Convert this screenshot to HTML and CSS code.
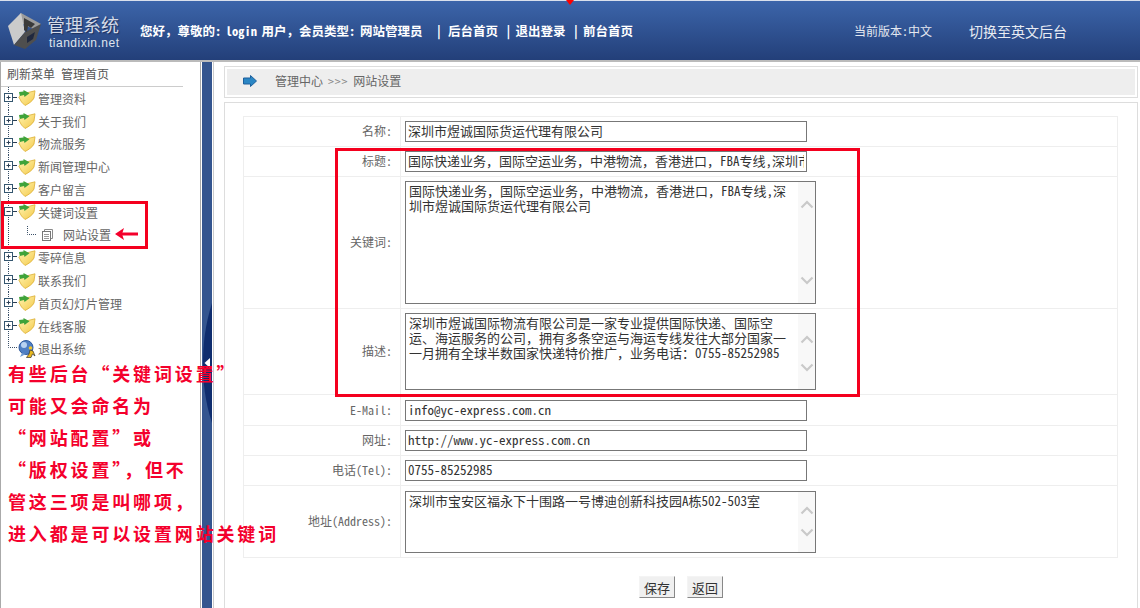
FILE: index.html
```html
<!DOCTYPE html>
<html lang="zh-CN">
<head>
    <meta charset="UTF-8">
    <title>网站设置</title>
    <link rel="stylesheet" href="styles.css">
</head>
<body>
    <svg class="defs" width="0" height="0">
        <defs>
            <linearGradient id="folder-fill" x1="0" y1="0" x2="1" y2="1">
                <stop offset="0" stop-color="#fff4b0"/>
                <stop offset="1" stop-color="#f4c94a"/>
            </linearGradient>
            <symbol id="folder" viewBox="0 0 18 16">
                <path d="M0.800 7 L4 4 L17 0.800 L16 8 C14.500 11 11 13.500 7 15.500 L3.500 12 Z" fill="url(#folder-fill)" stroke="#dcae34" stroke-width="0.800"/>
                <path d="M1 2 L5.500 1.500 L5.500 0 L11.500 3.200 L6.500 7 L6 5 L1.800 6 Z" fill="#3fa33a"/>
            </symbol>
            <symbol id="tw-plus" viewBox="0 0 14 23">
                <path d="M4.500 0 V23" stroke="#3a5068" stroke-dasharray="1 1"/>
                <rect x="0.500" y="6.500" width="8" height="8" fill="#fff" stroke="#34566f"/>
                <path d="M2.500 10.500 H6.500 M4.500 8.500 V12.500 M9 10.500 H13" stroke="#2a3f55"/>
            </symbol>
            <symbol id="tw-minus" viewBox="0 0 14 23">
                <path d="M4.500 0 V23" stroke="#3a5068" stroke-dasharray="1 1"/>
                <rect x="0.500" y="6.500" width="8" height="8" fill="#fff" stroke="#34566f"/>
                <path d="M2.500 10.500 H6.500 M9 10.500 H13" stroke="#2a3f55"/>
            </symbol>
            <symbol id="chev-up" viewBox="0 0 14 9">
                <path d="M1.500 7.500 L7 2 L12.500 7.500" fill="none" stroke="#c9c9c9" stroke-width="2.200"/>
            </symbol>
            <symbol id="chev-down" viewBox="0 0 14 9">
                <path d="M1.500 1.500 L7 7 L12.500 1.500" fill="none" stroke="#c9c9c9" stroke-width="2.200"/>
            </symbol>
        </defs>
    </svg>

    <header class="topbar">
        <div class="logo">
            <svg class="logo-mark" width="36" height="38" viewBox="0 0 36 38">
                <path d="M14 1 L34 12 L28 18 L8 8 Z" fill="#9c9c9c"/>
                <path d="M1 14 L14 1 L18 20 L7 33 Z" fill="#cbcbcb"/>
                <path d="M18 20 L34 12 L29 28 L18 37 L7 33 Z" fill="#4e4e4e"/>
                <path d="M20 25 L28 20 L26 27 L20 31 Z" fill="#20283e"/>
                <path d="M17 6 L28 12 L24 16 L21 14 L20 20 L17 18 Z" fill="#3a3a3a"/>
            </svg>
            <div class="logo-text">
                <div class="logo-title">管理系统</div>
                <div class="logo-site">tiandixin.net</div>
            </div>
        </div>
        <div class="welcome">
            <span>您好，尊敬的: login 用户，会员类型: 网站管理员</span>
            <span class="sep first">|</span><a href="#">后台首页</a>
            <span class="sep">|</span><a href="#">退出登录</a>
            <span class="sep">|</span><a href="#">前台首页</a>
        </div>
        <div class="version">当前版本:中文</div>
        <a class="switch-lang" href="#">切换至英文后台</a>
    </header>

    <div class="layout">
        <aside class="sidebar">
            <div class="side-head">刷新菜单 管理首页</div>
            <ul class="tree">
                <li class="tree-row"><svg class="twig"><use href="#tw-plus"/></svg><svg class="folder"><use href="#folder"/></svg>管理资料</li>
                <li class="tree-row"><svg class="twig"><use href="#tw-plus"/></svg><svg class="folder"><use href="#folder"/></svg>关于我们</li>
                <li class="tree-row"><svg class="twig"><use href="#tw-plus"/></svg><svg class="folder"><use href="#folder"/></svg>物流服务</li>
                <li class="tree-row"><svg class="twig"><use href="#tw-plus"/></svg><svg class="folder"><use href="#folder"/></svg>新闻管理中心</li>
                <li class="tree-row"><svg class="twig"><use href="#tw-plus"/></svg><svg class="folder"><use href="#folder"/></svg>客户留言</li>
                <li class="tree-row"><svg class="twig"><use href="#tw-minus"/></svg><svg class="folder"><use href="#folder"/></svg>关键词设置</li>
                <li class="tree-row child">
                    <svg class="child-twig" width="38" height="23" viewBox="0 0 38 23">
                        <path d="M4.500 0 V23" stroke="#3a5068" stroke-dasharray="1 1"/>
                        <path d="M23.500 2 V10.500 H33" fill="none" stroke="#3a5068" stroke-dasharray="1 1"/>
                    </svg>
                    <svg class="doc" width="11" height="12" viewBox="0 0 11 12">
                        <path d="M2.500 2.500 V0.500 H10.500 V9.500 H8.500" fill="none" stroke="#8a8a8a"/>
                        <rect x="0.500" y="2.500" width="8" height="9" fill="#fff" stroke="#777"/>
                        <path d="M2 5.500 H7 M2 7.500 H7 M2 9.500 H7" stroke="#999"/>
                    </svg>
                    网站设置
                </li>
                <li class="tree-row"><svg class="twig"><use href="#tw-plus"/></svg><svg class="folder"><use href="#folder"/></svg>零碎信息</li>
                <li class="tree-row"><svg class="twig"><use href="#tw-plus"/></svg><svg class="folder"><use href="#folder"/></svg>联系我们</li>
                <li class="tree-row"><svg class="twig"><use href="#tw-plus"/></svg><svg class="folder"><use href="#folder"/></svg>首页幻灯片管理</li>
                <li class="tree-row"><svg class="twig"><use href="#tw-plus"/></svg><svg class="folder"><use href="#folder"/></svg>在线客服</li>
                <li class="tree-row">
                    <svg class="twig" viewBox="0 0 14 23">
                        <path d="M4.500 0 V10.500 H13" fill="none" stroke="#3a5068" stroke-dasharray="1 1"/>
                    </svg>
                    <svg class="folder" viewBox="0 0 18 18">
                        <circle cx="8" cy="7.500" r="7" fill="#4f7fc4" stroke="#2f5a9c"/>
                        <circle cx="6" cy="5" r="3" fill="#b8d2f2"/>
                        <path d="M4 13 L2 17 L8 14 Z" fill="#6f9ad2"/>
                        <circle cx="12.500" cy="8" r="1.800" fill="#f3c62a"/>
                        <path d="M12 10 L15 11 L17 16 L14.500 14 L13 17.500 L8.500 17.500 L11 14 Z" fill="#e8b81e" stroke="#333" stroke-width="0.700"/>
                    </svg>退出系统
                </li>
            </ul>
        </aside>

        <div class="strip">
            <svg class="strip-handle" width="10" height="120" viewBox="0 0 10 120">
                <path d="M10 0 C3 22 1 42 1 60 C1 80 3 98 10 120 Z" fill="#0f2d6e"/>
                <path d="M8 55 V65 L2.500 60 Z" fill="#fff"/>
            </svg>
        </div>

        <main class="main">
            <div class="crumb-box">
                <div class="crumb">
                    <svg class="crumb-arrow" width="14" height="12" viewBox="0 0 14 12">
                        <path d="M0.500 3 H7.500 V0.500 L13.500 6 L7.500 11.500 V9 H0.500 Z" fill="#2a86c4" stroke="#1c5f9c"/>
                    </svg>
                    <span>管理中心</span><span class="crumb-sep">&gt;&gt;&gt;</span><span>网站设置</span>
                </div>
            </div>

            <div class="panel">
                <table class="form-table">
                    <tr class="h30"><th>名称:</th><td><input class="field" type="text" value="深圳市煜诚国际货运代理有限公司"></td></tr>
                    <tr class="h30"><th>标题:</th><td><input class="field" type="text" value="国际快递业务，国际空运业务，中港物流，香港进口，FBA专线,深圳市煜诚国际货运代理有限公司"></td></tr>
                    <tr>
                        <th>关键词:</th>
                        <td>
                            <div class="area-wrap">
                                <textarea class="area area-keywords">国际快递业务，国际空运业务，中港物流，香港进口，FBA专线,深
圳市煜诚国际货运代理有限公司</textarea>
                                <div class="fake-scroll scroll-keywords">
                                    <svg width="14" height="9"><use href="#chev-up"/></svg>
                                    <svg width="14" height="9"><use href="#chev-down"/></svg>
                                </div>
                            </div>
                        </td>
                    </tr>
                    <tr>
                        <th>描述:</th>
                        <td>
                            <div class="area-wrap">
                                <textarea class="area area-desc">深圳市煜诚国际物流有限公司是一家专业提供国际快递、国际空
运、海运服务的公司，拥有多条空运与海运专线发往大部分国家一
一月拥有全球半数国家快递特价推广，业务电话：0755-85252985</textarea>
                                <div class="fake-scroll scroll-desc">
                                    <svg width="14" height="9"><use href="#chev-up"/></svg>
                                    <svg width="14" height="9"><use href="#chev-down"/></svg>
                                </div>
                            </div>
                        </td>
                    </tr>
                    <tr class="h30 row-mail"><th>E-Mail:</th><td><input class="field" type="text" value="info@yc-express.com.cn"></td></tr>
                    <tr class="h30"><th>网址:</th><td><input class="field" type="text" value="http://www.yc-express.com.cn"></td></tr>
                    <tr class="h30"><th>电话(Tel):</th><td><input class="field" type="text" value="0755-85252985"></td></tr>
                    <tr class="row-addr">
                        <th>地址(Address):</th>
                        <td>
                            <div class="area-wrap">
                                <textarea class="area area-addr">深圳市宝安区福永下十围路一号博迪创新科技园A栋502-503室</textarea>
                                <div class="fake-scroll scroll-addr">
                                    <svg width="14" height="9"><use href="#chev-up"/></svg>
                                    <svg width="14" height="9"><use href="#chev-down"/></svg>
                                </div>
                            </div>
                        </td>
                    </tr>
                </table>
                <div class="actions">
                    <button class="btn" type="button">保存</button>
                    <button class="btn" type="button">返回</button>
                </div>
            </div>
        </main>
    </div>

    <!-- 红色标注 -->
    <div class="tick"></div>
    <div class="mark mark-side"></div>
    <svg class="mark-arrow" width="24" height="14" viewBox="0 0 24 14">
        <path d="M23 7 H5" stroke="#f4002c" stroke-width="3"/>
        <path d="M0 7 L9 1 L7 7 L9 13 Z" fill="#f4002c"/>
    </svg>
    <div class="mark mark-form"></div>
    <div class="note">
        <p>有些后台“关键词设置”</p>
        <p>可能又会命名为</p>
        <p>“网站配置”或</p>
        <p>“版权设置”，但不</p>
        <p>管这三项是叫哪项，</p>
        <p>进入都是可以设置网站关键词</p>
    </div>
</body>
</html>
```

FILE: styles.css
```css
html, body {
    height: 100%;
    margin: 0;
    overflow: hidden;
}
body {
    position: relative;
    display: flex;
    flex-direction: column;
    background-color: #fff;
    color: #666;
    font-family: "Noto Sans Mono CJK SC", "Noto Sans CJK SC", monospace;
    font-size: 12px;
}
.defs {
    position: absolute;
}

/* top bar */
.topbar {
    display: flex;
    align-items: center;
    flex: none;
    height: 59px;
    border-top: 1px solid #d9e0ec;
    background: linear-gradient(#3c65aa, #233f79);
    color: #fff;
}
.logo {
    display: flex;
    align-items: center;
    width: 140px;
    flex: none;
    padding: 2px 0 0 7px;
    box-sizing: border-box;
}
.logo-mark {
    flex: none;
    margin: -2px 4px 0 0;
}
.logo-title {
    font-family: "Noto Sans CJK SC", sans-serif;
    font-size: 18px;
    line-height: 22px;
    color: #d5dbe8;
    text-shadow: 1px 1px 1px #1c2f5c;
}
.logo-site {
    font-family: "Liberation Sans", sans-serif;
    font-size: 12px;
    line-height: 13px;
    margin-top: 2px;
    letter-spacing: 0.500px;
    color: #dfe4ee;
    padding-left: 2px;
}
.welcome {
    width: 714px;
    flex: none;
    font-size: 12.500px;
    font-weight: bold;
    word-spacing: -1.700px;
    white-space: nowrap;
}
.welcome a,
.switch-lang {
    color: #fff;
    text-decoration: none;
}
.sep {
    margin: 0 4px 0 2.700px;
}
.sep.first {
    margin-left: 8.700px;
    margin-right: 6px;
}
.version {
    width: 115px;
    flex: none;
    color: #e4e8f0;
}
.switch-lang {
    font-size: 14px;
    color: #e8ecf3;
}

/* body layout */
.layout {
    display: flex;
    flex: 1;
    min-height: 0;
    border-top: 2px solid #bbb;
}
.sidebar {
    width: 201px;
    flex: none;
    box-sizing: border-box;
    border-left: 1px solid #aaa;
    border-right: 1px solid #aaa;
}
.side-head {
    width: 182px;
    height: 25px;
    line-height: 24px;
    box-sizing: border-box;
    padding-left: 6px;
    border-bottom: 1px solid #ccc;
    color: #555;
}
.tree {
    list-style: none;
    margin: -0.200px 0 0;
    padding: 0;
}
.tree-row {
    display: flex;
    align-items: center;
    height: 22.800px;
    padding-left: 3px;
    color: #666;
}
.twig {
    flex: none;
    width: 14px;
    height: 23px;
}
.folder {
    flex: none;
    width: 18px;
    height: 18px;
    margin-right: 2px;
}
.child-twig {
    flex: none;
}
.doc {
    flex: none;
    margin-right: 10px;
}
.strip {
    width: 10px;
    flex: none;
    margin-left: 1px;
    background-color: #34558f;
    padding-top: 241px;
    box-sizing: content-box;
}
.strip-handle {
    display: block;
}
.main {
    display: flex;
    flex-direction: column;
    flex: 1;
    min-width: 0;
    border-left: 1px solid #ccc;
    margin-left: 1px;
    padding: 4px 2px 0 10px;
}
.crumb-box {
    flex: none;
    border: 1px solid #ddd;
    padding: 2px;
}
.crumb {
    display: flex;
    align-items: center;
    height: 26px;
    box-sizing: border-box;
    padding: 0 0 3px 16px;
    background-color: #eee;
    color: #666;
}
.crumb-arrow {
    margin-right: 18px;
}
.crumb-sep {
    margin: 0 5px;
    letter-spacing: 0.700px;
    color: #888;
}
.panel {
    flex: 1;
    min-height: 0;
    overflow: hidden;
    margin-top: 4px;
    border: 1px solid #ddd;
    border-bottom: 0;
    padding: 13px 18px 0 18px;
}

/* form */
.form-table {
    width: 875px;
    border-collapse: collapse;
}
.form-table th,
.form-table td {
    border: 1px solid #eee;
    padding: 4px 0;
}
.form-table th {
    width: 157px;
    padding: 3px 8px 5px 0;
    box-sizing: border-box;
    font-weight: normal;
    text-align: right;
    color: #666;
}
.form-table td {
    padding-left: 4px;
    font-size: 0;
}
.form-table .h30 th,
.form-table .h30 td {
    height: 21px;
}
.form-table .row-mail td {
    padding-top: 5px;
}
.form-table .row-addr td {
    padding-top: 5px;
}
.field,
.area {
    font-family: "Noto Sans Mono CJK SC", "Noto Sans CJK SC", monospace;
    font-size: 13px;
    color: #333;
    border: 1px solid #777;
    box-sizing: border-box;
    margin: 0;
    outline: none;
}
.field {
    width: 402px;
    height: 21px;
    padding: 0 2px 2px;
}
.area-wrap {
    position: relative;
    width: 411px;
}
.area {
    display: block;
    width: 411px;
    padding: 1px 3px;
    line-height: 15px;
    resize: none;
    overflow: hidden;
    white-space: pre;
}
.area-keywords {
    height: 123px;
}
.area-desc {
    height: 77px;
}
.area-addr {
    height: 62px;
}
.fake-scroll {
    position: absolute;
    top: 1px;
    right: 1px;
    bottom: 1px;
    width: 17px;
    box-sizing: border-box;
    display: flex;
    flex-direction: column;
    align-items: center;
    justify-content: space-between;
    background-color: #f8f8f8;
}
.scroll-keywords {
    padding: 18px 0;
}
.scroll-desc {
    padding: 21px 0 17px;
}
.scroll-addr {
    padding: 14px 0 15px;
}
.actions {
    display: flex;
    gap: 12px;
    width: 875px;
    box-sizing: border-box;
    padding: 18px 0 0 396px;
}
.btn {
    width: 36px;
    height: 22px;
    padding: 0;
    font-family: "Noto Sans CJK SC", sans-serif;
    font-size: 13px;
    color: #333;
    background-color: #f0f0f0;
    border: 1px solid #f4f4f4;
    border-right-color: #888;
    border-bottom-color: #888;
}

/* red annotations over the page */
.tick {
    position: absolute;
    left: 566px;
    top: 0;
    border-left: 4px solid transparent;
    border-right: 4px solid transparent;
    border-top: 5px solid #f00;
}
.mark {
    position: absolute;
    box-sizing: border-box;
    border: 3px solid #f4001e;
}
.mark-side {
    left: 1px;
    top: 201px;
    width: 147px;
    height: 48px;
}
.mark-form {
    left: 335px;
    top: 148px;
    width: 525px;
    height: 249px;
}
.mark-arrow {
    position: absolute;
    left: 115px;
    top: 227px;
}
.note {
    position: absolute;
    left: 8px;
    top: 357px;
    font-family: "Noto Sans CJK SC", sans-serif;
    font-size: 18px;
    font-weight: bold;
    letter-spacing: 2.850px;
    line-height: 32.100px;
    color: #f4002c;
    white-space: nowrap;
}
.note p {
    margin: 0;
}
```
